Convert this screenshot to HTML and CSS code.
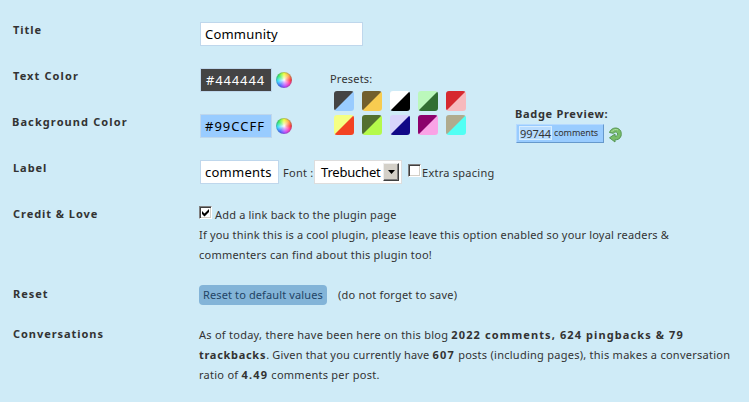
FILE: index.html
```html
<!DOCTYPE html>
<html lang="en">
<head>
<meta charset="utf-8">
<title>Badge settings</title>
<link rel="stylesheet" href="styles.css">
</head>
<body>
<main class="settings">
  <section class="row">
    <h2 class="name title-name">Title</h2>
    <div class="controls"><div class="field field-title">Community</div></div>
  </section>

  <section class="colors">
    <div class="color-rows">
      <div class="row">
        <h2 class="name">Text Color</h2>
        <div class="controls"><div class="field field-color dark">#444444</div><span class="wheel"></span></div>
      </div>
      <div class="row">
        <h2 class="name name-bg">Background Color</h2>
        <div class="controls"><div class="field field-color light">#99CCFF</div><span class="wheel"></span></div>
      </div>
    </div>
    <div class="presets">
      <div class="presets-title">Presets:</div>
      <div class="swatches">
        <i class="swatch s1"></i><i class="swatch s2"></i><i class="swatch s3"></i><i class="swatch s4"></i><i class="swatch s5"></i>
        <i class="swatch s6"></i><i class="swatch s7"></i><i class="swatch s8"></i><i class="swatch s9"></i><i class="swatch s10"></i>
      </div>
    </div>
    <div class="preview">
      <h2 class="preview-title">Badge Preview:</h2>
      <div class="preview-line">
        <div class="badge"><span class="count">99744</span><span class="unit">comments</span></div>
        <svg class="refresh" width="15" height="16" viewBox="0 0 15 16">
          <path d="M1.500 5.500C2.500 2 6 .5 9 1.200C12.500 2 14 5.500 13 9C12.200 11.800 9.500 13 7 12.800V15L1.500 10.800L7 7V9.300C9.500 9.200 10.200 7.500 9.300 6C8.300 4.600 6.500 4.800 5.200 6.300Z" fill="#79bd68" stroke="#559653"/>
          <path d="M3.500 5C5 2.500 8 1.900 10 3" fill="none" stroke="#b0dda4"/>
        </svg>
      </div>
    </div>
  </section>

  <section class="row">
    <h2 class="name">Label</h2>
    <div class="controls">
      <div class="field field-label">comments</div>
      <span class="font-text">Font :</span>
      <div class="select"><span class="select-text">Trebuchet</span><span class="arrow"><svg width="7" height="4" viewBox="0 0 7 4"><path d="M0 0H7L3.500 4Z"/></svg></span></div>
      <span class="check check-spacing"></span>
      <span class="spacing-text">Extra spacing</span>
    </div>
  </section>

  <section class="row row-credit">
    <h2 class="name name-credit">Credit &amp; Love</h2>
    <div class="copy">
      <div class="line check-line"><span class="check"><svg width="9" height="9" viewBox="0 0 9 9"><path d="M1 3V6L3.500 8.500L8 4V1L3.500 5.500Z"/></svg></span><span class="c1">Add a link back to the plugin page</span></div>
      <div class="line"><span class="c2">If you think this is a cool plugin, please leave this option enabled so your loyal readers &amp;</span></div>
      <div class="line"><span class="c3">commenters can find about this plugin too!</span></div>
    </div>
  </section>

  <section class="row row-reset">
    <h2 class="name">Reset</h2>
    <div class="reset-line"><span class="button">Reset to default values</span><span class="hint">(do not forget to save)</span></div>
  </section>

  <section class="row row-talk">
    <h2 class="name">Conversations</h2>
    <div class="copy">
      <div class="line">As of today, there have been here on this blog <b class="totals">2022 comments, 624 pingbacks &amp; 79</b></div>
      <div class="line"><b class="totals-end">trackbacks</b><span class="c1">. Given that you currently have </span><b>607</b> posts (including pages), this makes a conversation</div>
      <div class="line">ratio of <b>4.49</b> comments per post.</div>
    </div>
  </section>
</main>
</body>
</html>
```
FILE: styles.css
```css
* { box-sizing: border-box; }
body {
  margin: 0;
  background: #cfebf7;
  color: #333;
  font: 11px/20px "Noto Sans", "Open Sans", sans-serif;
  letter-spacing: 0.26px;
}
.settings { width: 749px; height: 402px; padding-top: 7px; overflow: hidden; }
.row { display: grid; grid-template-columns: 187px 1fr; height: 46px; padding-left: 13px; }
.name { margin: 0; padding-top: 13px; font-size: 11px; line-height: 20px; font-weight: 700; letter-spacing: 0.95px; white-space: nowrap; }
.color-rows .name { letter-spacing: 1.1px; }
.name-bg { margin-left: -1px; }
.controls { display: flex; align-items: center; padding-top: 8px; }
.field, .select {
  height: 24px;
  border: 1px solid #bfd7ec;
  background: #fff;
  color: #000;
  font-size: 13px;
  line-height: 23px;
  padding-left: 4px;
  white-space: nowrap;
}
.field-title { width: 163px; letter-spacing: 0.2px; }
.field-color { width: 72px; padding-left: 5px; letter-spacing: 0.85px; }
.dark { background: #444; color: #fff; }
.light { background: #9cf; padding-left: 4px; letter-spacing: 1px; }
.wheel {
  width: 16px;
  height: 16px;
  margin-left: 4px;
  border-radius: 50%;
  border: 1px solid rgba(90, 110, 140, 0.35);
  background: radial-gradient(circle, #fff 0, rgba(255,255,255,.6) 20%, rgba(255,255,255,0) 60%),
    conic-gradient(#ef3, #fa4 45deg, #f33 90deg, #f3a 125deg, #b4f 170deg, #46f 215deg, #3df 260deg, #3e5 310deg, #ef3);
  background-origin: border-box;
}
.colors { display: flex; height: 92px; }
.color-rows { width: 330px; }
.presets { width: 185px; padding-top: 16px; }
.presets-title { height: 22px; letter-spacing: 0.2px; }
.swatches { display: grid; grid-template-columns: repeat(5, 20px); column-gap: 8px; row-gap: 4px; padding-left: 4px; }
.swatch { height: 20px; border-radius: 3px; background: linear-gradient(135deg, var(--a) 49%, var(--b) 51%); }
.s1 { --a: #444; --b: #9cf; }
.s2 { --a: #725f2d; --b: #f8cc50; }
.s3 { --a: #fff; --b: #000; }
.s4 { --a: #bbf8bb; --b: #326f32; }
.s5 { --a: #d6292f; --b: #f7b9bd; }
.s6 { --a: #f5ff83; --b: #f34222; }
.s7 { --a: #52702f; --b: #b4fa4b; }
.s8 { --a: #d8d4fb; --b: #110887; }
.s9 { --a: #8c006b; --b: #faa3e6; }
.s10 { --a: #b0ab8e; --b: #52fff4; }
.preview { padding-top: 51px; }
.preview-title { margin: 0; font-size: 11px; line-height: 20px; letter-spacing: 0.7px; white-space: nowrap; }
.preview-line { display: flex; padding-left: 1px; }
.badge {
  display: flex;
  width: 88px;
  height: 19px;
  padding: 1px 0 0 2px;
  background: #9cf;
  border: 1px solid #6699cc;
  border-top-color: #b6daff;
  border-left-color: #b6daff;
}
.count { width: 33px; height: 14px; border: 1px solid #d8edff; background: #b8dcff; line-height: 13px; letter-spacing: -0.1px; white-space: nowrap; }
.unit { margin-left: 2px; font-size: 9px; line-height: 14px; letter-spacing: -0.1px; }
.refresh { margin: 3px 0 0 4px; }
.field-label { width: 79px; letter-spacing: 0.25px; }
.font-text { width: 31px; margin: 2px 0 0 4px; padding-top: 0; position: relative; white-space: nowrap; }
.select { display: flex; width: 88px; padding-left: 6px; border-color: #ddd; letter-spacing: -0.2px; }
.select-text { width: 62px; }
.arrow {
  display: flex; align-items: center; justify-content: center;
  width: 16px; height: 18px; margin-top: 2px;
  background: #d4d0c8;
  border: 1px solid; border-color: #eee #404040 #404040 #eee;
  box-shadow: inset -1px -1px #808080;
}
.check {
  display: block; flex: none; width: 13px; height: 13px;
  background: #fff;
  border: 1px solid; border-color: #808080 #fff #fff #808080;
  box-shadow: inset 1px 1px #404040, inset -1px -1px #d4d0c8;
}
.check svg { display: block; margin: 1px; }
.check-spacing { margin: -3px 0 0 6px; }
.spacing-text { margin: 2px 0 0 1px; }
.row-credit { height: 80px; }
.copy { padding-top: 14px; margin-left: -1px; }
.line { height: 20px; white-space: nowrap; }
.line b { letter-spacing: 1.2px; }
.line .totals { letter-spacing: 1.1px; }
.line .totals-end { letter-spacing: 0.7px; }
.check-line { display: flex; }
.check-line .check { margin: 1px 3px 0 0; }
.c1, .c2 { letter-spacing: 0.18px; }
.c3 { letter-spacing: 0.23px; }
.row-reset { height: 40px; }
.reset-line { padding-top: 14px; margin-left: -1px; display: flex; }
.button { width: 128px; height: 20px; padding-left: 4px; border-radius: 4px; background: #83b4d8; color: #224466; white-space: nowrap; letter-spacing: 0.12px; }
.hint { margin-left: 11px; letter-spacing: 0.2px; }
.row-talk { height: 84px; }
```
